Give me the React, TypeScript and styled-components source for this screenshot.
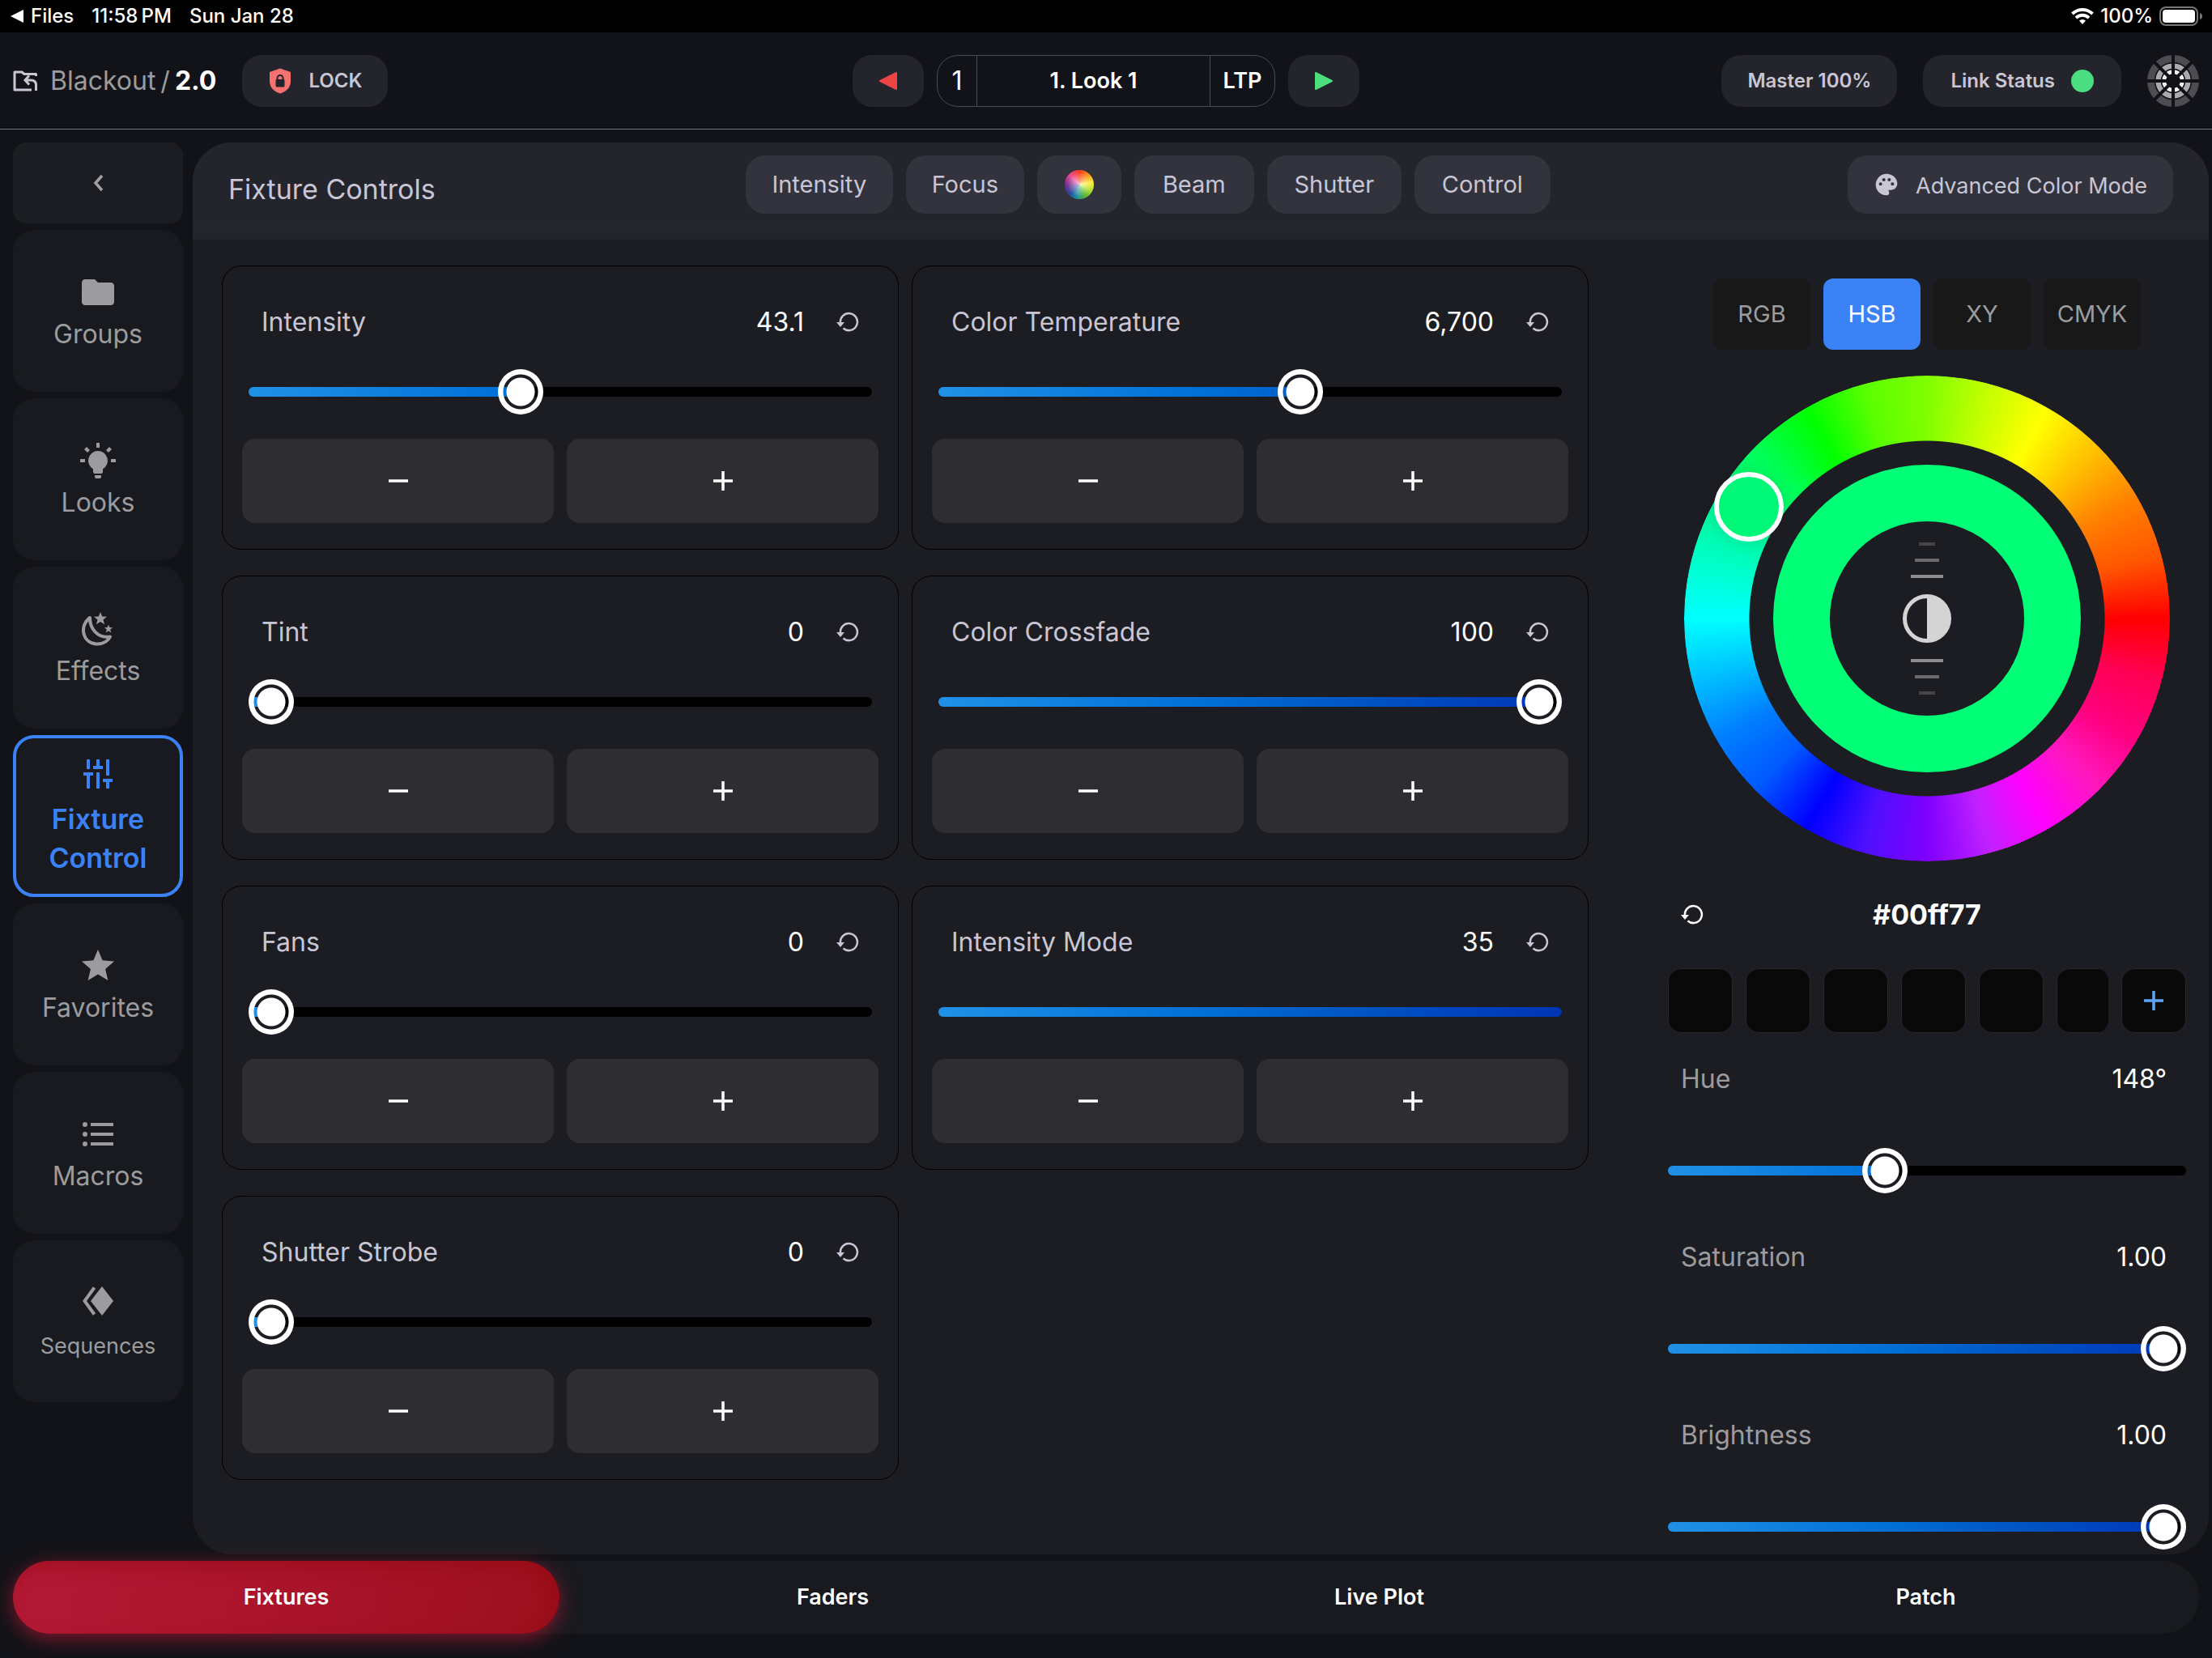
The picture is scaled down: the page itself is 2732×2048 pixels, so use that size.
import React, { useId, useState } from 'react';
import styled, { createGlobalStyle, css } from 'styled-components';
import { MdFolder, MdPalette, MdStar } from 'react-icons/md';

const c = {
  bg: '#121318',
  tile: '#181a1f',
  panel: '#1c1d22',
  panelHead: '#24242d',
  chip: '#33333d',
  step: '#2d2d32',
  blue: '#3b82f6',
  lilac: '#c8c6d4',
  grey: '#9c9c9e',
  green: '#4ade80',
  red: '#ef4444',
};

const GlobalStyle = createGlobalStyle`
  *, *::before, *::after { box-sizing: border-box; }
  body {
    margin: 0;
    background: ${c.bg};
    color: #fff;
    font-family: Inter, "Liberation Sans", sans-serif;
    font-size: 32px;
    line-height: 48px;
  }
  button { margin: 0; padding: 0; border: 0; background: none; font: inherit; color: inherit; cursor: pointer; }
  h1, h2 { margin: 0; font: inherit; }
  svg { display: block; flex: none; }
`;

const App = styled.div`
  display: flex;
  flex-direction: column;
  min-height: 100vh;
`;

/* ---------- status bar ---------- */

const StatusBar = styled.div`
  display: flex;
  justify-content: space-between;
  align-items: center;
  height: 40px;
  padding: 0 11px 0 12px;
  background: #000;
  font-size: 24px;
  line-height: 40px;
`;

const StatusGroup = styled.div<{ $gap: number }>`
  display: flex;
  align-items: center;
  gap: ${(p) => p.$gap}px;
`;

const BackLink = styled.a`
  display: flex;
  align-items: center;
  gap: 8px;
  color: #fff;
  font-weight: 500;
  text-decoration: none;
`;

const StatusText = styled.span`
  font-weight: 500;
`;

/* ---------- header ---------- */

const Header = styled.header`
  display: grid;
  grid-template-columns: 1fr auto 1fr;
  align-items: center;
  height: 120px;
  padding: 0 16px;
  border-bottom: 1px solid #6b7280;
`;

const HeaderLeft = styled.div`
  display: flex;
  align-items: center;
  gap: 32px;
`;

const HeaderRight = styled.div`
  display: flex;
  align-items: center;
  justify-content: flex-end;
  gap: 32px;
`;

const Crumb = styled.a`
  display: flex;
  align-items: center;
  gap: 16px;
  color: ${c.grey};
  text-decoration: none;
  white-space: nowrap;
`;

const CrumbTrail = styled.span`
  display: flex;
  gap: 6px;
  strong { color: #fff; font-weight: 700; }
`;

const Pill = styled.button<{ $pad?: number }>`
  display: flex;
  align-items: center;
  gap: 20px;
  height: 64px;
  padding: 0 ${(p) => p.$pad ?? 32}px;
  border-radius: 24px;
  background: ${c.panelHead};
  color: ${c.lilac};
  font-size: 24px;
  font-weight: 600;
  white-space: nowrap;
`;

const Dot = styled.span`
  width: 28px;
  height: 28px;
  border-radius: 50%;
  background: ${c.green};
`;

const CueBar = styled.div`
  display: flex;
  align-items: center;
  gap: 16px;
`;

const CueArrow = styled(Pill)`
  justify-content: center;
  width: 88px;
  padding: 0;
`;

const CueBox = styled.div`
  display: grid;
  grid-template-columns: 48px 288px 80px;
  height: 64px;
  border: 1px solid #4a4b50;
  border-radius: 26px;
`;

const CueCell = styled.button<{ $light?: boolean }>`
  font-size: ${(p) => (p.$light ? 32 : 27)}px;
  font-weight: ${(p) => (p.$light ? 400 : 600)};
  & + & { border-left: 1px solid #4a4b50; }
`;

/* ---------- body ---------- */

const Main = styled.div`
  display: flex;
  flex: 1;
  gap: 12px;
  padding: 16px 4px 8px 16px;
`;

const Sidebar = styled.nav`
  display: flex;
  flex-direction: column;
  gap: 8px;
  flex: 0 0 210px;
`;

const Collapse = styled.button`
  display: flex;
  align-items: center;
  justify-content: center;
  height: 100px;
  border-radius: 16px;
  background: ${c.panel};
`;

const SideItem = styled.button<{ $active?: boolean; $small?: boolean }>`
  display: flex;
  flex-direction: column;
  align-items: center;
  justify-content: center;
  gap: ${(p) => (p.$small || p.$active ? 8 : 4)}px;
  height: 200px;
  padding-top: 6px;
  border-radius: 26px;
  background: ${c.tile};
  color: ${c.grey};
  font-size: ${(p) => (p.$small ? 27 : 32)}px;
  ${(p) =>
    p.$active &&
    css`
      padding-top: 0;
      border: 4px solid ${c.blue};
      color: ${c.blue};
      font-size: 34px;
      font-weight: 600;
    `}
`;

const SideIcon = styled.span`
  display: flex;
  align-items: center;
  justify-content: center;
  height: 48px;
`;

const Panel = styled.section`
  display: flex;
  flex-direction: column;
  flex: 1;
  min-width: 0;
  border-radius: 48px;
  background: ${c.panel};
  overflow: hidden;
`;

const PanelHead = styled.div`
  display: flex;
  justify-content: space-between;
  height: 120px;
  padding: 16px 44px 0;
  background: linear-gradient(180deg, ${c.panelHead} 80%, #24252b);
`;

const PanelTitle = styled.h1`
  padding-right: 16px;
  color: ${c.lilac};
  font-size: 34px;
  line-height: 84px;
`;

const Chips = styled.div`
  display: flex;
  gap: 16px;
`;

const Chip = styled.button<{ $width?: number }>`
  display: flex;
  align-items: center;
  justify-content: center;
  gap: 20px;
  width: ${(p) => (p.$width ? `${p.$width}px` : 'auto')};
  height: 72px;
  padding: 0 32px;
  border-radius: 24px;
  background: ${c.chip};
  color: ${c.lilac};
  font-size: 29px;
  white-space: nowrap;
`;

const ModeButton = styled(Chip)`
  font-size: 27px;
  span { padding-top: 4px; }
`;

const ColorDisc = styled.span`
  flex: none;
  width: 36px;
  height: 36px;
  border-radius: 50%;
  background: radial-gradient(#ffffffaa, #ffffff00 60%),
    conic-gradient(#ff3a1c, #ff9a1c 45deg, #ffee3a 80deg, #b8e030 115deg, #5cb82c 150deg, #1c94a0 190deg, #24489c 225deg, #7a2c90 270deg, #e84c98 315deg, #ff3a1c);
`;

const PanelBody = styled.div`
  display: grid;
  grid-template-columns: minmax(0, 1fr) 640px;
  gap: 98px;
  flex: 1;
  padding: 0 28px 0 36px;
`;

const Cards = styled.div`
  display: grid;
  grid-template-columns: 1fr 1fr;
  gap: 32px 16px;
  align-content: start;
  padding-top: 32px;
`;

const Card = styled.div`
  padding: 33px 24px 32px;
  border: 1px solid #000;
  border-radius: 24px;
`;

const CardHead = styled.div`
  display: flex;
  align-items: center;
  height: 72px;
  padding: 0 24px;
`;

const CardLabel = styled.label`
  flex: 1;
  color: ${c.lilac};
`;

const IconButton = styled.button<{ $bright?: boolean }>`
  color: ${(p) => (p.$bright ? '#fff' : c.lilac)};
`;

const CardValue = styled.output`
  margin-right: 40px;
`;

const CardSlider = styled.div`
  margin: 22px 8px 30px;
`;

const Steps = styled.div`
  display: grid;
  grid-template-columns: 1fr 1fr;
  gap: 16px;
`;

const Step = styled.button`
  display: flex;
  align-items: center;
  justify-content: center;
  height: 104px;
  border-radius: 16px;
  background: ${c.step};
`;

const Range = styled.input<{ $hideThumb?: boolean }>`
  display: block;
  width: 100%;
  height: 56px;
  margin: 0;
  appearance: none;
  background: transparent;
  cursor: pointer;

  &::-webkit-slider-runnable-track {
    height: 12px;
    border-radius: 6px;
    background: linear-gradient(90deg, transparent var(--fill), #000 var(--fill)),
      linear-gradient(90deg, #2191e6, #0070d8 42%, #005cc8 60%, #0034b4);
  }

  &::-webkit-slider-thumb {
    appearance: none;
    width: 56px;
    height: 56px;
    margin-top: -22px;
    border-radius: 50%;
    background: radial-gradient(circle, #fff 17px, transparent 18px, transparent 21px, #fff 22px);
    opacity: ${(p) => (p.$hideThumb ? 0 : 1)};
  }
`;

/* ---------- colour column ---------- */

const ColorColumn = styled.div`
  display: flex;
  flex-direction: column;
  padding-top: 48px;
`;

const Spaces = styled.div`
  display: flex;
  justify-content: center;
  gap: 16px;
  margin-bottom: 32px;
`;

const Space = styled.button<{ $active?: boolean }>`
  width: 120px;
  height: 88px;
  border-radius: 12px;
  background: ${(p) => (p.$active ? c.blue : '#181818')};
  color: ${(p) => (p.$active ? '#fff' : c.grey)};
  font-size: 29px;
`;

const Wheel = styled.div`
  position: relative;
  display: flex;
  align-items: center;
  justify-content: center;
  align-self: center;
  width: 600px;
  height: 600px;
`;

const HueRing = styled.div`
  position: absolute;
  inset: 0;
  border-radius: 50%;
  background: conic-gradient(
    from 90deg,
    #f00, #ff0055 15deg, #ff007f 30deg, #ff18c0 45deg, #f0f 60deg, #c020ff 75deg,
    #7f00ff 90deg, #5010ff 105deg, #00f 120deg, #0058ff 135deg, #007fff 150deg, #00c0ff 165deg,
    #0ff 180deg, #00ffc8 195deg, #00f58c 210deg, #00ff55 225deg, #0f0 240deg, #5aff00 255deg,
    #80ff00 270deg, #c4ff00 285deg, #ff0 300deg, #ffc000 315deg, #ff8000 330deg, #ff5500 345deg, #f00
  );
  mask: radial-gradient(circle, transparent 219px, #000 220px);
`;

const ColorRing = styled.div`
  display: flex;
  align-items: center;
  justify-content: center;
  width: 380px;
  height: 380px;
  border: 70px solid #00ff77;
  border-radius: 50%;
`;

const WheelHandle = styled.div`
  position: absolute;
  top: 119px;
  left: 37px;
  width: 86px;
  height: 86px;
  border: 6px solid #fff;
  border-radius: 50%;
  background: #00f777;
  box-shadow: 0 0 20px #0000001a;
`;

const HexRow = styled.div`
  display: grid;
  grid-template-columns: 1fr auto 1fr;
  align-items: center;
  height: 132px;
  padding: 0 16px;
`;

const Hex = styled.span`
  font-size: 34px;
  font-weight: 700;
`;

const Swatches = styled.div`
  display: flex;
  gap: 16px;
`;

const SwatchScroll = styled.div`
  display: flex;
  gap: 16px;
  flex: 1;
  min-width: 0;
  border-radius: 16px;
  overflow: hidden;
`;

const Swatch = styled.button`
  display: flex;
  align-items: center;
  justify-content: center;
  flex: 0 0 80px;
  height: 80px;
  border: 1px solid #28292d;
  border-radius: 16px;
  background: #090909;
  color: #60a5fa;
`;

const Channel = styled.div`
  padding-bottom: 22px;
  &:last-child { padding-bottom: 0; }
`;

const ChannelHead = styled.div`
  display: flex;
  align-items: center;
  justify-content: space-between;
  height: 112px;
  margin-bottom: 30px;
  padding: 2px 24px 0 16px;
  label { color: ${c.grey}; }
`;

/* ---------- bottom navigation ---------- */

const BottomNav = styled.nav`
  display: grid;
  grid-template-columns: repeat(4, 1fr);
  height: 90px;
  margin: 0 16px 30px;
  border-radius: 45px;
  background: ${c.tile};
`;

const NavTab = styled.button<{ $active?: boolean }>`
  border-radius: 45px;
  font-size: 27px;
  font-weight: 600;
  ${(p) =>
    p.$active &&
    css`
      background: linear-gradient(105deg, #b31935, #a81329 60%, #9c101c);
      box-shadow: 0 6px 24px #b31935b0, inset -8px 8px 20px #8c060c66;
    `}
`;

/* ---------- drawings ---------- */

const FolderBack = () => (
  <svg width="30" height="26" viewBox="0 0 30 26" fill="none" stroke={c.lilac} strokeWidth="3">
    <path d="M28.500 7V4.500H14L11 2H2v22h21" strokeLinejoin="round" />
    <path d="M20 6.500L15 12l5 5.500M15 12h7c4 0 6.500 2 6.500 6v7" />
  </svg>
);

const ShieldLock = () => (
  <svg width="30" height="32" viewBox="1 0 30 32">
    <path d="M16 .5L29 5v11c0 8-5.500 13.500-13 15.500C8.500 29.500 3 24 3 16V5z" fill="#f87171" />
    <rect x="10.500" y="14" width="11" height="9.500" rx="1.500" fill="#24242d" />
    <path d="M12.500 15v-2.500a3.500 3.500 0 017 0V15" fill="none" stroke="#24242d" strokeWidth="2" />
  </svg>
);

const Triangle = ({ flip, color }: { flip?: boolean; color: string }) => (
  <svg width="24" height="24" viewBox="0 0 24 24">
    <path d={flip ? 'M22 2v20L2 12z' : 'M2 2v20L22 12z'} fill={color} stroke={color} strokeWidth="2" strokeLinejoin="round" />
  </svg>
);

const Logo = () => (
  <svg width="64" height="64" viewBox="0 0 64 64" fill="none">
    <circle cx="32" cy="32" r="27.500" stroke="#4c4c52" strokeWidth="9" />
    <circle cx="32" cy="32" r="18.500" stroke="#aaaaac" strokeWidth="7" />
    <circle cx="32" cy="32" r="11.500" stroke="#fff" strokeWidth="5" />
    <circle cx="32" cy="32" r="22.500" stroke={c.bg} strokeWidth="1.500" />
    <circle cx="32" cy="32" r="14.500" stroke={c.bg} strokeWidth="1.500" />
    <path d="M32 0v64M0 32h64M9 9l46 46M9 55L55 9" stroke={c.bg} strokeWidth="4" />
  </svg>
);

const ResetIcon = () => (
  <svg width="28" height="28" viewBox="0 0 28 28" fill="none">
    <path d="M5 15A10.500 10.500 0 1 1 8.500 21.500" stroke="currentColor" strokeWidth="2.500" />
    <path d="M0 14h10l-5 6z" fill="currentColor" />
  </svg>
);

const Minus = () => (
  <svg width="24" height="24" viewBox="0 0 24 24" stroke="currentColor" strokeWidth="3.500">
    <path d="M0 12h24" />
  </svg>
);

const Plus = () => (
  <svg width="24" height="24" viewBox="0 0 24 24" stroke="currentColor" strokeWidth="3.500">
    <path d="M0 12h24M12 0v24" />
  </svg>
);

const ChevronLeft = () => (
  <svg width="14" height="22" viewBox="0 0 14 22" fill="none" stroke="#a0a0a0" strokeWidth="3.500">
    <path d="M12 2L4 11l8 9" />
  </svg>
);

const Bulb = () => (
  <svg width="44" height="44" viewBox="0 0 44 44" fill="currentColor">
    <path d="M22 10a12 12 0 00-6 22.400V36q0 2 2 2h8q2 0 2-2v-3.600A12 12 0 0022 10zM18 40h8v2q0 2-2 2h-4q-2 0-2-2z" />
    <path d="M20 0h4v6h-4zM0 20h6v4H0zM38 20h6v4h-6zM5 8l3-3 4 4-3 3zM39 8l-3-3-4 4 3 3z" />
  </svg>
);

const MoonStars = () => (
  <svg width="40" height="42" viewBox="0 0 40 42">
    <path d="M10 7C-3 16 0 38 18 39.500c9 .5 15-4.500 17-9C20 33 10 21 10 7z" fill="none" stroke="currentColor" strokeWidth="4" strokeLinejoin="round" />
    <path d="M23 0l2.200 5.500 5.800.3-4.500 3.700 1.600 5.800-5.100-3.300-5.100 3.300 1.600-5.800L15 5.800l5.800-.3zM33 15.500l1.400 3.500 3.800.2-3 2.400 1 3.800-3.200-2.200-3.200 2.200 1-3.800-3-2.400 3.800-.2z" fill="currentColor" />
  </svg>
);

const Faders = () => (
  <svg width="36" height="36" viewBox="0 0 36 36" fill="currentColor">
    <path d="M4 0h4v12H4zM0 16h12v4H8v16H4V20H0zM16 0h4v8h4v4H12V8h4zM16 16h4v20h-4zM28 0h4v20h-4zM24 24h12v4h-4v8h-4v-8h-4z" />
  </svg>
);

const ListIcon = () => (
  <svg width="38" height="30" viewBox="0 0 38 30" fill="currentColor">
    <path d="M10 1h28v4H10zM10 13h28v4H10zM10 25h28v4H10z" />
    <circle cx="3" cy="3" r="3" />
    <circle cx="3" cy="15" r="3" />
    <circle cx="3" cy="27" r="3" />
  </svg>
);

const Diamonds = () => (
  <svg width="38" height="36" viewBox="0 0 38 36">
    <path d="M24 0l14 18-14 18-14-18z" fill="currentColor" />
    <path d="M14.500 1.500L2.500 18l12 16.500" fill="none" stroke="currentColor" strokeWidth="4" />
  </svg>
);

const Wifi = () => (
  <svg width="28" height="22" viewBox="0 0 28 22" fill="none" stroke="#fff" strokeWidth="4">
    <path d="M1.500 8a18 18 0 0125 0M6 13a11.500 11.500 0 0116 0" />
    <path d="M14 21l-4-4.500a6 6 0 018 0z" fill="#fff" stroke="none" />
  </svg>
);

const Battery = () => (
  <svg width="54" height="24" viewBox="0 0 54 24">
    <rect x="1" y="1" width="46" height="22" rx="7" fill="none" stroke="#77777a" strokeWidth="2" />
    <rect x="4" y="4" width="40" height="16" rx="4" fill="#fff" />
    <path d="M50 8q3 1 3 4t-3 4z" fill="#77777a" />
  </svg>
);

const BrightnessDial = () => (
  <svg width="60" height="190" viewBox="0 0 60 190">
    <path d="M20 3h20M20 187h20" stroke="#45454a" strokeWidth="4" />
    <path d="M15 23h30M15 167h30" stroke="#6c6c70" strokeWidth="4" />
    <path d="M10 43h40M10 147h40" stroke="#8e8e92" strokeWidth="4" />
    <circle cx="30" cy="95" r="27.500" fill="none" stroke="#d4d4d4" strokeWidth="5" />
    <path d="M30 66a29 29 0 010 58z" fill="#d4d4d4" />
  </svg>
);

/* ---------- parts ---------- */

type SliderProps = { id: string; value: number; max: number; full?: boolean; onChange: (v: number) => void };

const Slider = ({ id, value, max, full, onChange }: SliderProps) => {
  const fill = full ? '100%' : `calc(28px + (100% - 56px) * ${value / max})`;
  return (
    <Range
      id={id}
      type="range"
      min={0}
      max={max}
      step="any"
      value={value}
      $hideThumb={full}
      style={{ '--fill': fill } as React.CSSProperties}
      onChange={(e) => onChange(Number(e.target.value))}
    />
  );
};

type ControlData = { label: string; value: number; base?: number; max: number; format?: (v: number) => string; full?: boolean };

const controls: ControlData[] = [
  { label: 'Intensity', value: 43.1, max: 100, format: (v) => v.toFixed(1) },
  { label: 'Color Temperature', value: 4700, base: 2000, max: 8000, format: (v) => Math.round(v).toLocaleString('en-US') },
  { label: 'Tint', value: 0, max: 100 },
  { label: 'Color Crossfade', value: 100, max: 100 },
  { label: 'Fans', value: 0, max: 100 },
  { label: 'Intensity Mode', value: 35, max: 35, full: true },
  { label: 'Shutter Strobe', value: 0, max: 100 },
];

const Control = ({ label, value, base = 0, max, format = (v) => String(Math.round(v)), full }: ControlData) => {
  const id = useId();
  const [v, setV] = useState(value);
  const nudge = (d: number) => setV(Math.min(max, Math.max(0, v + (d * max) / 100)));
  return (
    <Card>
      <CardHead>
        <CardLabel htmlFor={id}>{label}</CardLabel>
        <CardValue htmlFor={id}>{format(v + base)}</CardValue>
        <IconButton aria-label={`Reset ${label}`} onClick={() => setV(value)}><ResetIcon /></IconButton>
      </CardHead>
      <CardSlider>
        <Slider id={id} value={v} max={max} full={full} onChange={setV} />
      </CardSlider>
      <Steps>
        <Step aria-label={`Decrease ${label}`} onClick={() => nudge(-1)}><Minus /></Step>
        <Step aria-label={`Increase ${label}`} onClick={() => nudge(1)}><Plus /></Step>
      </Steps>
    </Card>
  );
};

const channels = [
  { label: 'Hue', value: 148, max: 360, format: (v: number) => `${Math.round(v)}°` },
  { label: 'Saturation', value: 1, max: 1, format: (v: number) => v.toFixed(2) },
  { label: 'Brightness', value: 1, max: 1, format: (v: number) => v.toFixed(2) },
];

const ColorChannel = ({ label, value, max, format }: (typeof channels)[number]) => {
  const id = useId();
  const [v, setV] = useState(value);
  return (
    <Channel>
      <ChannelHead>
        <label htmlFor={id}>{label}</label>
        <output htmlFor={id}>{format(v)}</output>
      </ChannelHead>
      <Slider id={id} value={v} max={max} onChange={setV} />
    </Channel>
  );
};

const sideItems = [
  { lines: ['Groups'], icon: <MdFolder size={48} /> },
  { lines: ['Looks'], icon: <Bulb /> },
  { lines: ['Effects'], icon: <MoonStars /> },
  { lines: ['Fixture', 'Control'], icon: <Faders />, active: true },
  { lines: ['Favorites'], icon: <MdStar size={48} /> },
  { lines: ['Macros'], icon: <ListIcon /> },
  { lines: ['Sequences'], icon: <Diamonds />, small: true },
];

export default function FixtureControls() {
  return (
    <App>
      <GlobalStyle />
      <StatusBar>
        <StatusGroup $gap={22}>
          <BackLink href="#files">
            <svg width="18" height="18" viewBox="0 0 18 18"><path d="M17 1v16L1 9z" fill="#fff" /></svg>
            Files
          </BackLink>
          <StatusText>11:58{'\u202f'}PM</StatusText>
          <StatusText>Sun Jan 28</StatusText>
        </StatusGroup>
        <StatusGroup $gap={8}>
          <Wifi />
          <StatusText>100%</StatusText>
          <Battery />
        </StatusGroup>
      </StatusBar>

      <Header>
        <HeaderLeft>
          <Crumb href="#shows">
            <FolderBack />
            <CrumbTrail><span>Blackout</span><span>/</span><strong>2.0</strong></CrumbTrail>
          </Crumb>
          <Pill><ShieldLock />LOCK</Pill>
        </HeaderLeft>
        <CueBar>
          <CueArrow aria-label="Previous look"><Triangle flip color={c.red} /></CueArrow>
          <CueBox>
            <CueCell $light>1</CueCell>
            <CueCell>1. Look 1</CueCell>
            <CueCell>LTP</CueCell>
          </CueBox>
          <CueArrow aria-label="Next look"><Triangle color={c.green} /></CueArrow>
        </CueBar>
        <HeaderRight>
          <Pill>Master 100%</Pill>
          <Pill $pad={34}>Link Status<Dot /></Pill>
          <Logo />
        </HeaderRight>
      </Header>

      <Main>
        <Sidebar>
          <Collapse aria-label="Collapse sidebar"><ChevronLeft /></Collapse>
          {sideItems.map((s) => (
            <SideItem key={s.lines[0]} $active={s.active} $small={s.small}>
              <SideIcon>{s.icon}</SideIcon>
              <span>{s.lines.map((l) => <div key={l}>{l}</div>)}</span>
            </SideItem>
          ))}
        </Sidebar>

        <Panel>
          <PanelHead>
            <PanelTitle>Fixture Controls</PanelTitle>
            <Chips>
              <Chip $width={182}>Intensity</Chip>
              <Chip $width={146}>Focus</Chip>
              <Chip $width={104} aria-label="Color"><ColorDisc /></Chip>
              <Chip $width={148}>Beam</Chip>
              <Chip $width={166}>Shutter</Chip>
              <Chip $width={168}>Control</Chip>
            </Chips>
            <ModeButton><MdPalette size={32} /><span>Advanced Color Mode</span></ModeButton>
          </PanelHead>
          <PanelBody>
            <Cards>
              {controls.map((d) => <Control key={d.label} {...d} />)}
            </Cards>
            <ColorColumn>
              <Spaces>
                <Space>RGB</Space>
                <Space $active>HSB</Space>
                <Space>XY</Space>
                <Space>CMYK</Space>
              </Spaces>
              <Wheel>
                <HueRing />
                <ColorRing><BrightnessDial /></ColorRing>
                <WheelHandle />
              </Wheel>
              <HexRow>
                <IconButton $bright aria-label="Reset color"><ResetIcon /></IconButton>
                <Hex>#00ff77</Hex>
              </HexRow>
              <Swatches>
                <SwatchScroll>
                  {[1, 2, 3, 4, 5, 6].map((n) => <Swatch key={n} aria-label={`Swatch ${n}`} />)}
                </SwatchScroll>
                <Swatch aria-label="Add swatch"><Plus /></Swatch>
              </Swatches>
              {channels.map((d) => <ColorChannel key={d.label} {...d} />)}
            </ColorColumn>
          </PanelBody>
        </Panel>
      </Main>

      <BottomNav>
        <NavTab $active>Fixtures</NavTab>
        <NavTab>Faders</NavTab>
        <NavTab>Live Plot</NavTab>
        <NavTab>Patch</NavTab>
      </BottomNav>
    </App>
  );
}
